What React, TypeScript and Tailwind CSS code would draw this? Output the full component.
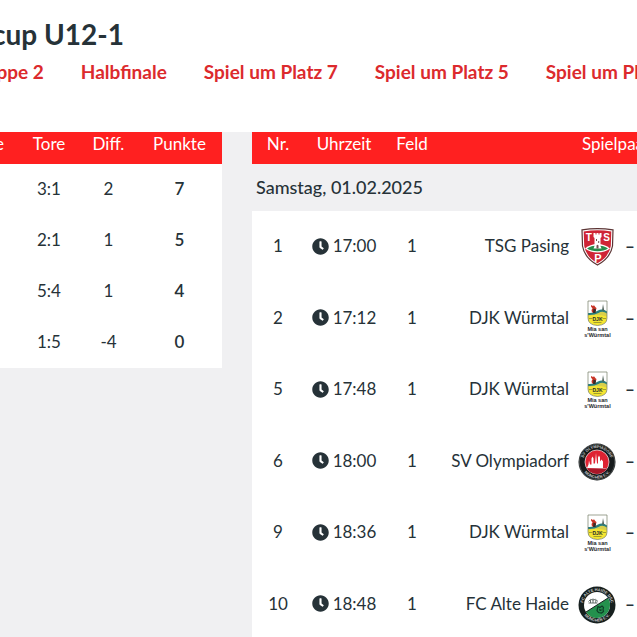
import type { ReactNode } from "react";
import { FaClock } from "react-icons/fa";

interface Match {
    nr: number;
    time: string;
    field: number;
    home: string;
    logo: ReactNode;
}

function PasingLogo() {
    return (
        <svg viewBox="0 0 38 38" className="size-[38px]" aria-hidden="true">
            <path
                d="M4 1.800Q19.500 -.5 35 1.800L34.500 18Q32.500 30 19.500 37Q6.500 30 4.500 18Z"
                fill="#fff"
                stroke="#5b3434"
                strokeWidth="1.200"
            />
            <path
                d="M5.700 3.400Q19.500 1.300 33.300 3.400L32.800 18Q31 29 19.500 35.200Q8 29 6.200 18Z"
                fill="#cf2435"
            />
            <path d="M7 20.500Q12 16 19.500 16T32 20.500Q27 24.500 19.500 24.500T7 20.500Z" fill="#fff" />
            <path d="M9 20.500Q13 17.500 19.500 17.500T30 20.500Q26 23.200 19.500 23.200T9 20.500Z" fill="#278b4a" />
            <path
                d="M15.500 5h2v1.500h1V5h2v1.500h1V5h2v4l-1 1V18l1 2.500h-8l1-2.500v-8l-1-1Z"
                fill="#fff"
            />
            <path d="M18.500 20.500v-3q1-1.500 2 0v3ZM18 11h1v2h-1ZM20.200 13h1v2h-1Z" fill="#705050" />
            <g fill="#fff" fontFamily="Liberation Sans, sans-serif" fontWeight="700" textAnchor="middle">
                <text x="10.700" y="13" fontSize="10">T</text>
                <text x="28.500" y="13" fontSize="10">S</text>
                <text x="19.800" y="33.500" fontSize="11">P</text>
            </g>
        </svg>
    );
}

function WuermtalLogo() {
    return (
        <svg viewBox="0 0 38 38" className="size-[38px]" aria-hidden="true">
            <path d="M10 1h19v17q0 7-9.500 7.500Q10 25 10 18Z" fill="#fff" />
            <path d="M10 13.500Q17 13 21.500 10.500Q25 9 29 11.500V18H10Z" fill="#d8cf4c" />
            <path d="M10 13Q16 13.500 20 10.500Q24.500 8 29 11.500V13.500Q24.500 10.500 20.500 13Q16 15.500 10 15Z" fill="#287e80" />
            <path d="M10 16Q19 14 29 16.500V18q0 7-9.500 7.500Q10 25 10 18Z" fill="#f4e532" />
            <path d="M24 10.500l1-6.500 1.200 6.500Z" fill="#52645c" />
            <path d="M13 5l2 1 1-.8 1.500 2 1 .8-.5 2-1 2.500h-3l-.5-2.500 1-1.500-1.500-2Z" fill="#c93527" />
            <path d="M15.500 8.500l2.500 1-.5 3.500h-2.500Z" fill="#382b26" />
            <path d="M10 1h19v17q0 7-9.500 7.500Q10 25 10 18Z" fill="none" stroke="#747b65" strokeWidth=".7" />
            <path d="M11 18.500h3.500M24.500 18.500h3.500M15.500 22.500h8" stroke="#7c812c" strokeWidth=".7" />
            <g
                fill="#25282c"
                fontFamily="Liberation Sans, sans-serif"
                fontWeight="700"
                textAnchor="middle"
            >
                <text x="19.500" y="20.500" fontSize="5">DJK</text>
                <text x="19.500" y="30.500" fontSize="5.500">Mia san</text>
                <text x="19.500" y="37.300" fontSize="5.500">s'Würmtal</text>
            </g>
        </svg>
    );
}

function OlympiadorfLogo() {
    return (
        <svg viewBox="0 0 38 38" className="size-[38px]" aria-hidden="true">
            <defs>
                <path id="olympia-top" d="M5 19a14 14 0 0 1 28 0" />
                <path id="olympia-bottom" d="M2.500 19a16.500 16.500 0 0 0 33 0" />
            </defs>
            <circle cx="19" cy="19" r="18.500" fill="#171b1c" />
            <circle cx="19" cy="19" r="17.700" fill="none" stroke="#8f9492" strokeWidth=".4" />
            <circle cx="19" cy="19" r="12" fill="#df2232" stroke="#eee" strokeWidth=".7" />
            <path
                d="M9 25l1.500-3.500.5-4 1 4h1.500v-6l1-2 1 2v5h1.500l1-10.500 1 10.500h1v-6l1-2 1 2v4l1.500-2 1.500 2v6.500h3.500l-1 1Z"
                fill="#fff"
            />
            <path d="M9 25.500h20q-3 5-10 5.400Q12 30.500 9 25.500Z" fill="#a81728" />
            <g
                fill="#c9cccb"
                fontFamily="Liberation Sans, sans-serif"
                fontSize="4"
                fontWeight="700"
                textAnchor="middle"
            >
                <text><textPath href="#olympia-top" startOffset="50%">SV OLYMPIADORF</textPath></text>
                <text><textPath href="#olympia-bottom" startOffset="50%">MÜNCHEN E.V.</textPath></text>
            </g>
        </svg>
    );
}

function AlteHaideLogo() {
    return (
        <svg viewBox="0 0 38 38" className="size-[38px]" aria-hidden="true">
            <defs>
                <path id="haide-top" d="M5 19a14 14 0 0 1 28 0" />
                <path id="haide-bottom" d="M2.500 19a16.500 16.500 0 0 0 33 0" />
            </defs>
            <circle cx="19" cy="19" r="18.500" fill="#17201f" />
            <circle cx="19" cy="19" r="13" fill="#fff" />
            <path d="M30 12A13 13 0 1 1 8 26Z" fill="#24914d" />
            <path d="M8 26L30 12" stroke="#17201f" strokeWidth="1" />
            <path d="M10.500 15.500q2-3.500 4.500-1.500 2.500-2 5 1.500M10.500 17h9M12.500 14v3M15 12.500v4.500M17.800 14v3" fill="none" stroke="#56605c" strokeWidth=".9" />
            <path
                d="M20 20.500l2 1 2-1.500 1.500 1.500-.5 2 .5 2-2 1.500-3-.5-1.500-2 .5-2Z"
                fill="#24914d"
                stroke="#0f3d27"
                strokeWidth="1.200"
            />
            <path d="M21 22.500l1.500 1 1-1v2.500h-2Z" fill="#123d28" />
            <g
                fill="#c9cccb"
                fontFamily="Liberation Sans, sans-serif"
                fontSize="4"
                fontWeight="700"
                textAnchor="middle"
            >
                <text><textPath href="#haide-top" startOffset="50%">FC ALTE HAIDE DSC</textPath></text>
                <text><textPath href="#haide-bottom" startOffset="50%">MÜNCHEN E.V.</textPath></text>
            </g>
        </svg>
    );
}

const rounds = ["Gruppe 2", "Halbfinale", "Spiel um Platz 7", "Spiel um Platz 5", "Spiel um Platz 3"];

const standings = [
    { goals: "3:1", diff: 2, points: 7 },
    { goals: "2:1", diff: 1, points: 5 },
    { goals: "5:4", diff: 1, points: 4 },
    { goals: "1:5", diff: -4, points: 0 },
];

const matches: Match[] = [
    { nr: 1, time: "17:00", field: 1, home: "TSG Pasing", logo: <PasingLogo /> },
    { nr: 2, time: "17:12", field: 1, home: "DJK Würmtal", logo: <WuermtalLogo /> },
    { nr: 5, time: "17:48", field: 1, home: "DJK Würmtal", logo: <WuermtalLogo /> },
    { nr: 6, time: "18:00", field: 1, home: "SV Olympiadorf", logo: <OlympiadorfLogo /> },
    { nr: 9, time: "18:36", field: 1, home: "DJK Würmtal", logo: <WuermtalLogo /> },
    { nr: 10, time: "18:48", field: 1, home: "FC Alte Haide", logo: <AlteHaideLogo /> },
];

function Standings() {
    return (
        <section className="flex w-[222px] shrink-0 justify-end overflow-hidden">
            <table className="w-[242px] shrink-0 table-fixed bg-white text-center">
                <colgroup>
                    <col className="w-[38px]" />
                    <col className="w-[62px]" />
                    <col className="w-[57px]" />
                    <col className="w-[85px]" />
                </colgroup>
                <thead className="bg-[#ff2020] text-white">
                    <tr>
                        <th className="pr-[14px] pb-2 text-right font-normal">e</th>
                        <th className="pb-2 font-normal">Tore</th>
                        <th className="pb-2 font-normal">Diff.</th>
                        <th className="pb-2 font-normal">Punkte</th>
                    </tr>
                </thead>
                <tbody>
                    {standings.map((row) => (
                        <tr key={row.goals} className="h-[51px]">
                            <td />
                            <td className="pb-0.5">{row.goals}</td>
                            <td className="pb-0.5">{row.diff}</td>
                            <td className="pb-0.5 font-semibold">{row.points}</td>
                        </tr>
                    ))}
                </tbody>
            </table>
        </section>
    );
}

function Schedule() {
    return (
        <section className="min-w-0 flex-1 overflow-hidden">
            <table className="w-full min-w-[568px] table-fixed bg-white text-center">
                <colgroup>
                    <col className="w-[52px]" />
                    <col className="w-[80px]" />
                    <col className="w-[56px]" />
                    <col />
                    <col className="w-[40px]" />
                    <col className="w-[26px]" />
                    <col className="w-[40px]" />
                    <col />
                </colgroup>
                <thead className="bg-[#ff2020] text-white">
                    <tr>
                        <th className="pb-2 font-normal">Nr.</th>
                        <th className="pb-2 font-normal">Uhrzeit</th>
                        <th className="pb-2 font-normal">Feld</th>
                        <th colSpan={5} className="pb-2 font-normal">
                            Spielpaarung
                        </th>
                    </tr>
                </thead>
                <tbody>
                    <tr className="h-[47px] bg-[#f0f0f2]">
                        <th colSpan={8} className="pb-0.5 pl-1 text-left text-lg leading-6 font-medium">
                            Samstag, 01.02.2025
                        </th>
                    </tr>
                    {matches.map((match) => (
                        <tr key={match.nr} className="h-[72px] odd:h-[71px]">
                            <td className="pb-0.5">{match.nr}</td>
                            <td className="pb-0.5">
                                <span className="flex items-center justify-center gap-1">
                                    <FaClock size={17} className="shrink-0" />
                                    {match.time}
                                </span>
                            </td>
                            <td className="pb-0.5">{match.field}</td>
                            <td className="pr-2 pb-0.5 text-right whitespace-nowrap">{match.home}</td>
                            <td>
                                <span className="flex justify-center">{match.logo}</span>
                            </td>
                            <td className="pb-0.5 font-bold">–</td>
                            <td />
                            <td />
                        </tr>
                    ))}
                </tbody>
            </table>
        </section>
    );
}

function App() {
    return (
        <div className="min-h-screen overflow-hidden bg-[#f0f0f2] font-['Lato',sans-serif] text-[17px] leading-6 text-[#263238]">
            <header className="h-[132px] bg-white pt-4">
                <h1 className="-ml-2 text-[28px] leading-9 font-bold">cup U12-1</h1>
                <nav className="-ml-[35px] flex gap-[37px] pt-2 text-[19px] font-bold whitespace-nowrap text-[#dc2a2d]">
                    {rounds.map((round) => (
                        <a key={round} href="#">
                            {round}
                        </a>
                    ))}
                </nav>
            </header>

            <main className="flex items-start gap-[30px]">
                <Standings />
                <Schedule />
            </main>
        </div>
    );
}

export default App;
